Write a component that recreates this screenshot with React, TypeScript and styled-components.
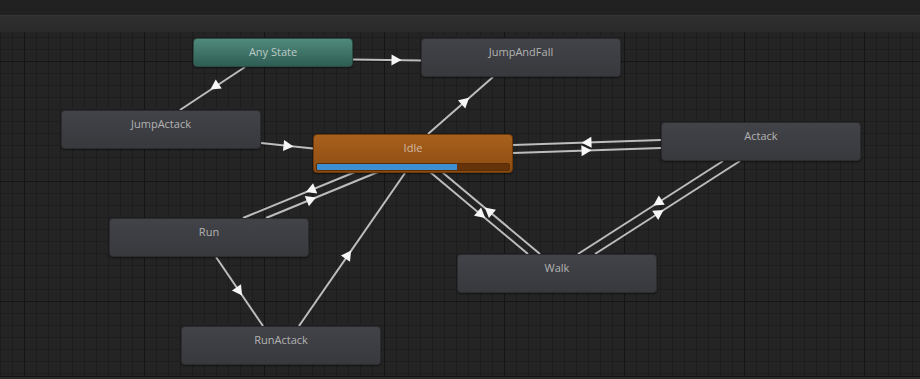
import styled, { createGlobalStyle, css } from "styled-components";

const GlobalStyle = createGlobalStyle`
	html, body {
		margin: 0;
		padding: 0;
		background: #212121;
		overflow: hidden;
	}
	body {
		font-family: "Open Sans", "Liberation Sans", sans-serif;
	}
`;

const Window = styled.div`
	display: flex;
	flex-direction: column;
	width: 920px;
	height: 379px;
	background: #212121;
`;

const TopStrip = styled.div`
	height: 15px;
	background: #212121;
	border-bottom: 1px solid #353535;
`;

const Toolbar = styled.div`
	height: 16px;
	background: linear-gradient(#2f2f2f, #2a2a2a);
`;

// minor lines every 12px, major every 120px
const Canvas = styled.div`
	position: relative;
	flex: 1;
	background-color: #242424;
	background-image:
		linear-gradient(to right, #151515 1px, transparent 1px),
		linear-gradient(to bottom, #151515 1px, transparent 1px),
		linear-gradient(to right, #1d1d1d 1px, transparent 1px),
		linear-gradient(to bottom, #1d1d1d 1px, transparent 1px);
	background-size: 120px 120px, 120px 120px, 12px 12px, 12px 12px;
	background-position: 24px 0, 0 29px, 0 0, 0 5px;
	overflow: hidden;
`;

const BottomBar = styled.div`
	height: 2px;
	border-top: 1px solid #111;
	background: #2b2b2b;
`;

const Edges = styled.svg`
	position: absolute;
	left: 0;
	top: 0;
	width: 920px;
	height: 344px;
`;

type Kind = "normal" | "any" | "active";

const kindStyles = {
	normal: css`
		background: linear-gradient(#424348, #38393d);
		border: 1px solid #2c2d30;
		color: #b3b3b3;
	`,
	any: css`
		background: linear-gradient(#4f8a7c, #2f5d53);
		border: 1px solid #2b4c44;
		color: #bccbc7;
	`,
	active: css`
		background: linear-gradient(#a8601d, #8c4c12);
		border: 1px solid #6e3a0a;
		color: #d2b9a2;
	`,
};

const Node = styled.div<{ $kind: Kind; $x: number; $y: number; $w: number; $h: number }>`
	position: absolute;
	left: ${(p) => p.$x}px;
	top: ${(p) => p.$y}px;
	width: ${(p) => p.$w}px;
	height: ${(p) => p.$h}px;
	box-sizing: border-box;
	border-radius: 4px;
	box-shadow: 0 1px 2px rgba(0, 0, 0, 0.5);
	display: flex;
	flex-direction: column;
	align-items: stretch;
	${(p) => kindStyles[p.$kind]}

	.label {
		font-size: 11px;
		line-height: 14px;
		padding-top: 6px;
		text-align: center;
	}
`;

const Progress = styled.div`
	margin: 8px 2px 0;
	height: 8px;
	background: #653309;
	border: 1px solid #5a2d07;
	border-radius: 2px;
	box-sizing: border-box;
	overflow: hidden;
`;

const ProgressFill = styled.div`
	height: 100%;
	background: #3c8fd1;
`;

// page coordinates: canvas starts at y = 32
const OFFSET_Y = 32;

const nodes: { name: string; kind: Kind; x: number; y: number; w: number; h: number; progress?: number }[] = [
	{ name: "Any State", kind: "any", x: 193, y: 38, w: 160, h: 29 },
	{ name: "JumpAndFall", kind: "normal", x: 421, y: 38, w: 200, h: 39 },
	{ name: "JumpActack", kind: "normal", x: 61, y: 110, w: 200, h: 39 },
	{ name: "Idle", kind: "active", x: 313, y: 134, w: 200, h: 39, progress: 73 },
	{ name: "Actack", kind: "normal", x: 661, y: 122, w: 200, h: 39 },
	{ name: "Run", kind: "normal", x: 109, y: 218, w: 200, h: 39 },
	{ name: "Walk", kind: "normal", x: 457, y: 254, w: 200, h: 39 },
	{ name: "RunActack", kind: "normal", x: 181, y: 326, w: 200, h: 39 },
];

// [x1, y1, x2, y2, arrowX, arrowY]
const transitions: number[][] = [
	[353, 59.5, 421, 60.5, 396, 60],
	[245, 67, 180, 110, 215, 86.5],
	[261, 143, 313, 148.5, 288, 146],
	[428, 134, 493, 77, 465, 101.5],
	[661, 140, 513, 145, 587, 142.5],
	[513, 153, 661, 148, 586, 150.5],
	[355, 172, 243, 218, 311, 190],
	[266, 218, 378, 172, 311, 199.5],
	[430, 172, 528, 254, 481, 214.5],
	[540, 254, 442, 172, 489, 211],
	[723, 161, 578, 254, 658, 202.5],
	[595, 254, 740, 161, 659, 213],
	[216, 257, 263, 326, 239, 291],
	[299, 326, 405, 173, 348, 255],
];

function Arrow({ t }: { t: number[] }) {
	const [x1, y1, x2, y2, ax, ay] = t;
	const len = Math.hypot(x2 - x1, y2 - y1);
	const dx = (x2 - x1) / len;
	const dy = (y2 - y1) / len;
	const tip = [ax + dx * 5.5, ay + dy * 5.5];
	const back = [ax - dx * 4.5, ay - dy * 4.5];
	const b1 = [back[0] - dy * 5.5, back[1] + dx * 5.5];
	const b2 = [back[0] + dy * 5.5, back[1] - dx * 5.5];
	return (
		<g>
			<line x1={x1} y1={y1} x2={x2} y2={y2} stroke="#bdbdbd" strokeWidth={2} />
			<polygon points={`${tip.join(",")} ${b1.join(",")} ${b2.join(",")}`} fill="#f6f6f6" />
		</g>
	);
}

export default function App() {
	return (
		<Window>
			<GlobalStyle />
			<TopStrip />
			<Toolbar />
			<Canvas>
				<Edges viewBox={`0 ${OFFSET_Y} 920 344`}>
					{transitions.map((t, i) => (
						<Arrow key={i} t={t} />
					))}
				</Edges>
				{nodes.map((n) => (
					<Node
						key={n.name}
						$kind={n.kind}
						$x={n.x}
						$y={n.y - OFFSET_Y}
						$w={n.w}
						$h={n.h}
					>
						<div className="label">{n.name}</div>
						{n.progress !== undefined && (
							<Progress>
								<ProgressFill style={{ width: `${n.progress}%` }} />
							</Progress>
						)}
					</Node>
				))}
			</Canvas>
			<BottomBar />
		</Window>
	);
}
